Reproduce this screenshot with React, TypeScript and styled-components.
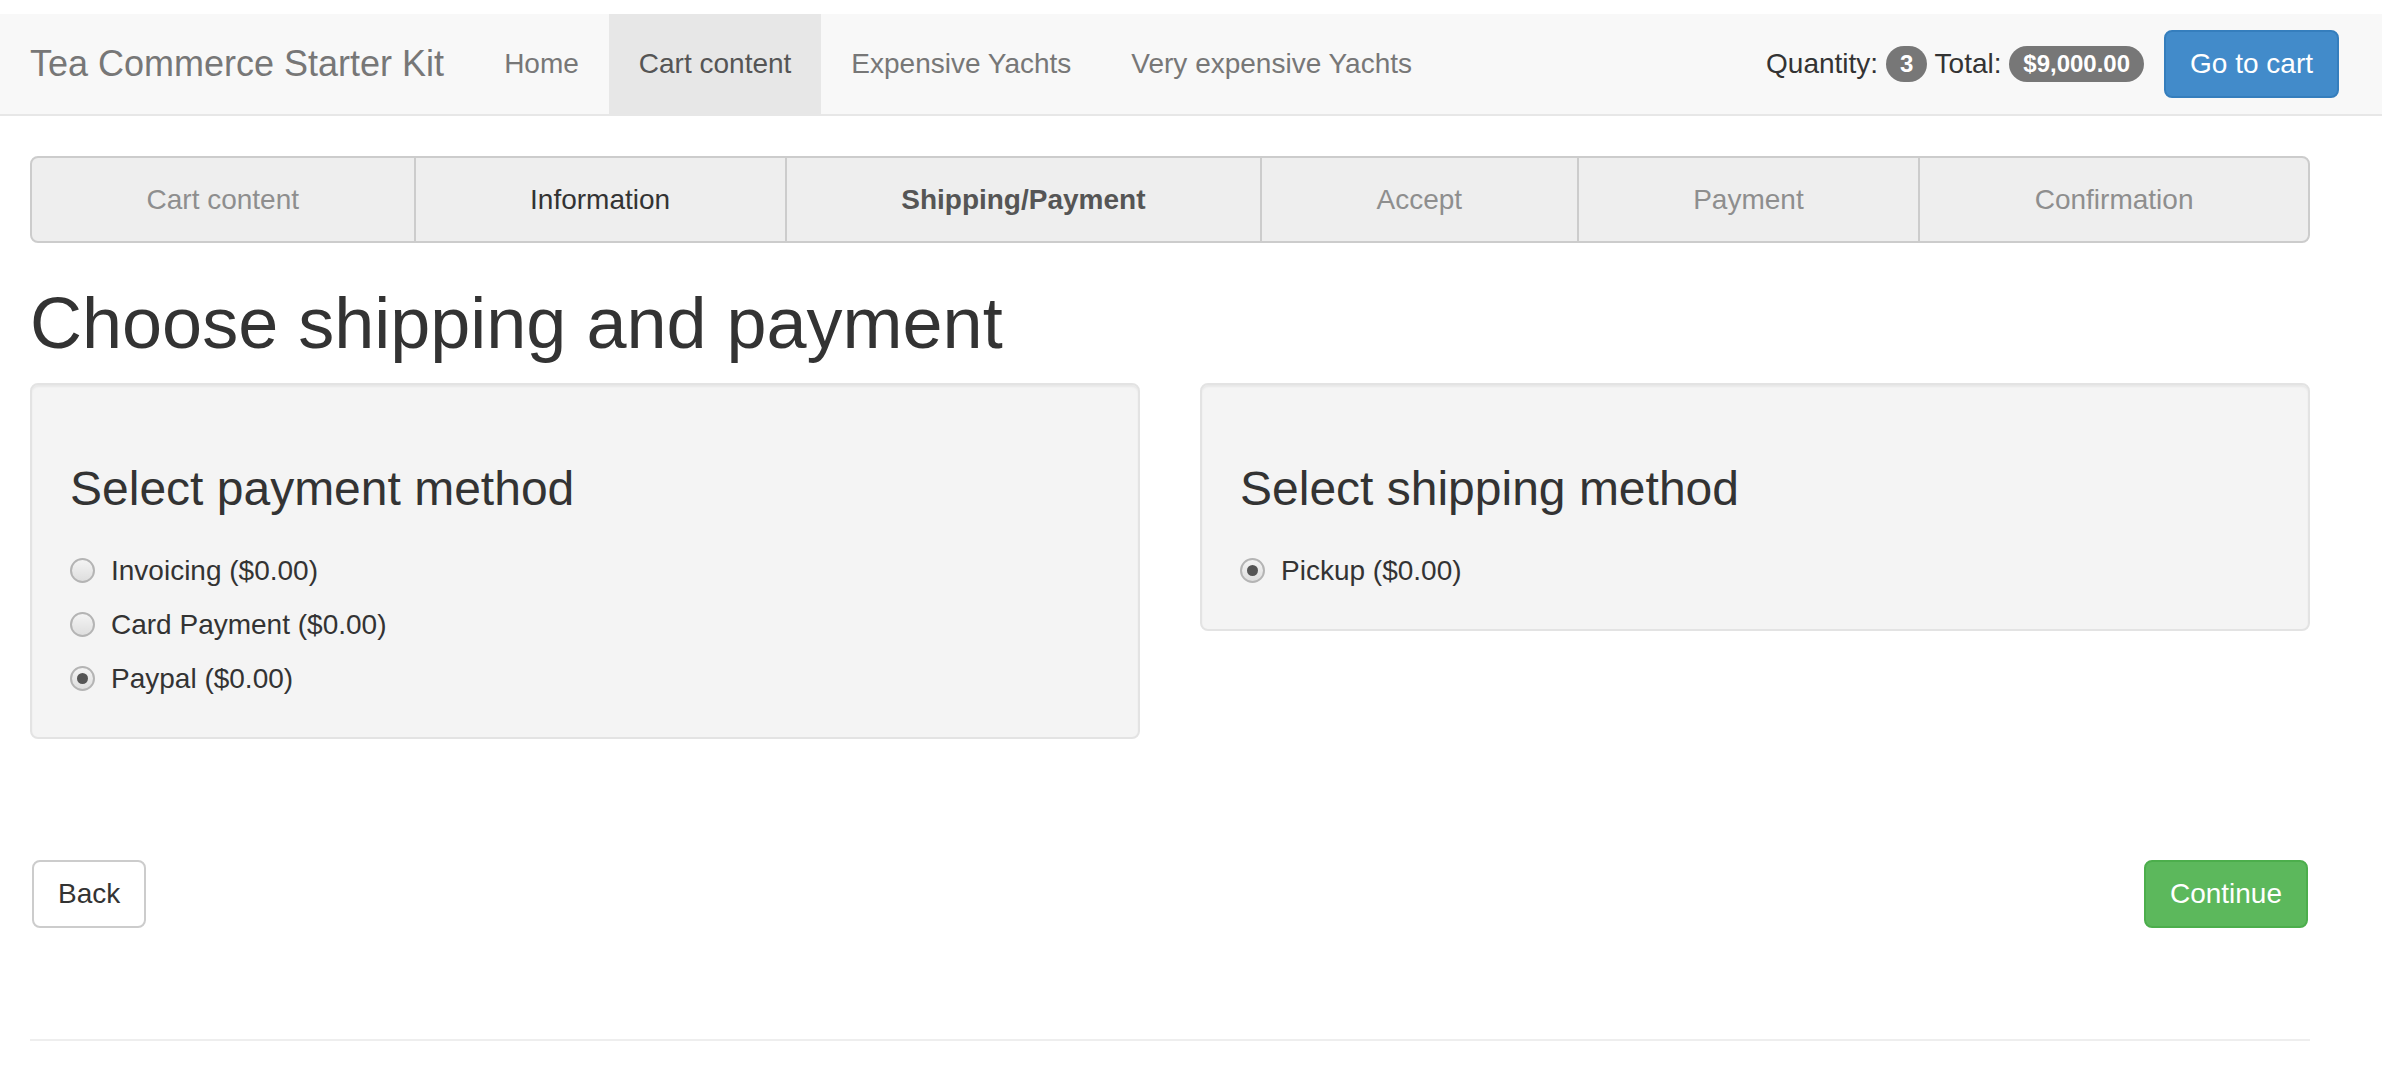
import React from "react";
import styled, { createGlobalStyle, css } from "styled-components";

const GlobalStyle = createGlobalStyle`
  html, body { margin: 0; padding: 0; background: #ffffff; }
  body {
    padding-top: 14px;
    font-family: "Liberation Sans", Arial, Helvetica, sans-serif;
    font-size: 28px;
    line-height: 40px;
    color: #333333;
  }
  * { box-sizing: border-box; }
`;

const Navbar = styled.nav`
  display: flex;
  align-items: stretch;
  height: 102px;
  background: #f8f8f8;
  border-bottom: 2px solid #e7e7e7;
  padding-right: 43px;
`;

const Brand = styled.a`
  display: block;
  padding: 0 30px;
  font-size: 36px;
  line-height: 100px;
  color: #777777;
  text-decoration: none;
`;

const NavList = styled.ul`
  display: flex;
  margin: 0;
  padding: 0;
  list-style: none;
`;

const NavLink = styled.a<{ $active?: boolean }>`
  display: block;
  padding: 0 30px;
  line-height: 100px;
  font-size: 28px;
  color: #777777;
  text-decoration: none;
  ${(p) =>
    p.$active &&
    css`
      background: #e7e7e7;
      color: #555555;
    `}
`;

const NavRight = styled.div`
  margin-left: auto;
  display: flex;
  align-items: center;
  gap: 20px;
`;

const CartInfo = styled.p`
  margin: 0;
  color: #333333;
  white-space: pre;
`;

const Badge = styled.span`
  display: inline-block;
  padding: 6px 14px;
  font-size: 24px;
  font-weight: bold;
  line-height: 24px;
  color: #ffffff;
  background: #777777;
  border-radius: 20px;
  vertical-align: 1px;
  white-space: nowrap;
`;

const Button = styled.button<{ $variant: "primary" | "default" | "success" }>`
  display: inline-block;
  height: 68px;
  padding: 0 24px;
  font-family: inherit;
  font-size: 28px;
  line-height: 64px;
  border: 2px solid;
  border-radius: 8px;
  cursor: pointer;
  ${(p) =>
    p.$variant === "primary" &&
    css`
      background: #428bca;
      border-color: #357ebd;
      color: #ffffff;
    `}
  ${(p) =>
    p.$variant === "default" &&
    css`
      background: #ffffff;
      border-color: #cccccc;
      color: #333333;
    `}
  ${(p) =>
    p.$variant === "success" &&
    css`
      background: #5cb85c;
      border-color: #4cae4c;
      color: #ffffff;
    `}
`;

const Container = styled.main`
  width: 2340px;
  padding: 0 30px;
`;

const Steps = styled.div`
  display: flex;
  margin-top: 40px;
  background: #eeeeee;
  border: 2px solid #cccccc;
  border-radius: 8px;
  overflow: hidden;
`;

const Step = styled.div<{ $state: "done" | "link" | "active" | "todo" }>`
  flex: 1 1 auto;
  text-align: center;
  padding: 21px 0;
  line-height: 41px;
  font-size: 28px;
  white-space: nowrap;
  & + & { border-left: 2px solid #cccccc; }
  color: ${(p) =>
    p.$state === "link" ? "#333333" : p.$state === "active" ? "#555555" : "#8e8e8e"};
  font-weight: ${(p) => (p.$state === "active" ? "bold" : "normal")};
`;

const Title = styled.h1`
  margin: 41px 0 20px;
  font-size: 72px;
  font-weight: normal;
  line-height: 1.1;
  color: #333333;
`;

const Columns = styled.div`
  display: grid;
  grid-template-columns: 1fr 1fr;
  gap: 60px;
  align-items: start;
`;

const Well = styled.section`
  background: #f4f4f4;
  border: 2px solid #e3e3e3;
  border-radius: 8px;
  box-shadow: inset 0 2px 2px rgba(0, 0, 0, 0.05);
  padding: 38px;
`;

const WellTitle = styled.h3`
  margin: 40px 0 0;
  font-size: 48px;
  font-weight: normal;
  line-height: 1.1;
  color: #333333;
`;

const RadioList = styled.div`
  display: flex;
  flex-direction: column;
  gap: 14px;
  margin-top: 35px;
`;

const RadioRow = styled.label`
  display: flex;
  align-items: center;
  gap: 16px;
  height: 40px;
  font-size: 28px;
  color: #333333;
  cursor: pointer;
`;

const RadioInput = styled.input`
  appearance: none;
  -webkit-appearance: none;
  margin: 0;
  width: 25px;
  height: 25px;
  flex: 0 0 25px;
  border-radius: 50%;
  border: 2px solid #b4b4b4;
  background: linear-gradient(#f4f4f4, #dedede);
  display: grid;
  place-items: center;
  &:checked::after {
    content: "";
    width: 11px;
    height: 11px;
    border-radius: 50%;
    background: #555555;
  }
`;

const Actions = styled.div`
  display: flex;
  justify-content: space-between;
  margin-top: 121px;
  padding: 0 2px;
`;

const Rule = styled.hr`
  margin: 111px 0 0;
  border: 0;
  border-top: 2px solid #eeeeee;
`;

type Option = { id: string; label: string; checked?: boolean };

const payment: Option[] = [
  { id: "inv", label: "Invoicing ($0.00)" },
  { id: "card", label: "Card Payment ($0.00)" },
  { id: "paypal", label: "Paypal ($0.00)", checked: true },
];

const shipping: Option[] = [{ id: "pickup", label: "Pickup ($0.00)", checked: true }];

const steps: { label: string; state: "done" | "link" | "active" | "todo" }[] = [
  { label: "Cart content", state: "done" },
  { label: "Information", state: "link" },
  { label: "Shipping/Payment", state: "active" },
  { label: "Accept", state: "todo" },
  { label: "Payment", state: "todo" },
  { label: "Confirmation", state: "todo" },
];

function MethodPanel({ title, name, options }: { title: string; name: string; options: Option[] }) {
  return (
    <Well>
      <WellTitle>{title}</WellTitle>
      <RadioList>
        {options.map((o) => (
          <RadioRow key={o.id}>
            <RadioInput type="radio" name={name} defaultChecked={o.checked} />
            {o.label}
          </RadioRow>
        ))}
      </RadioList>
    </Well>
  );
}

export default function App() {
  return (
    <>
      <GlobalStyle />
      <Navbar>
        <Brand href="#">Tea Commerce Starter Kit</Brand>
        <NavList>
          <li><NavLink href="#">Home</NavLink></li>
          <li><NavLink href="#" $active>Cart content</NavLink></li>
          <li><NavLink href="#">Expensive Yachts</NavLink></li>
          <li><NavLink href="#">Very expensive Yachts</NavLink></li>
        </NavList>
        <NavRight>
          <CartInfo>
            Quantity: <Badge>3</Badge> Total: <Badge>$9,000.00</Badge>
          </CartInfo>
          <Button $variant="primary">Go to cart</Button>
        </NavRight>
      </Navbar>
      <Container>
        <Steps>
          {steps.map((s) => (
            <Step key={s.label} $state={s.state}>{s.label}</Step>
          ))}
        </Steps>
        <Title>Choose shipping and payment</Title>
        <Columns>
          <MethodPanel title="Select payment method" name="payment" options={payment} />
          <MethodPanel title="Select shipping method" name="shipping" options={shipping} />
        </Columns>
        <Actions>
          <Button $variant="default">Back</Button>
          <Button $variant="success">Continue</Button>
        </Actions>
        <Rule />
      </Container>
    </>
  );
}
